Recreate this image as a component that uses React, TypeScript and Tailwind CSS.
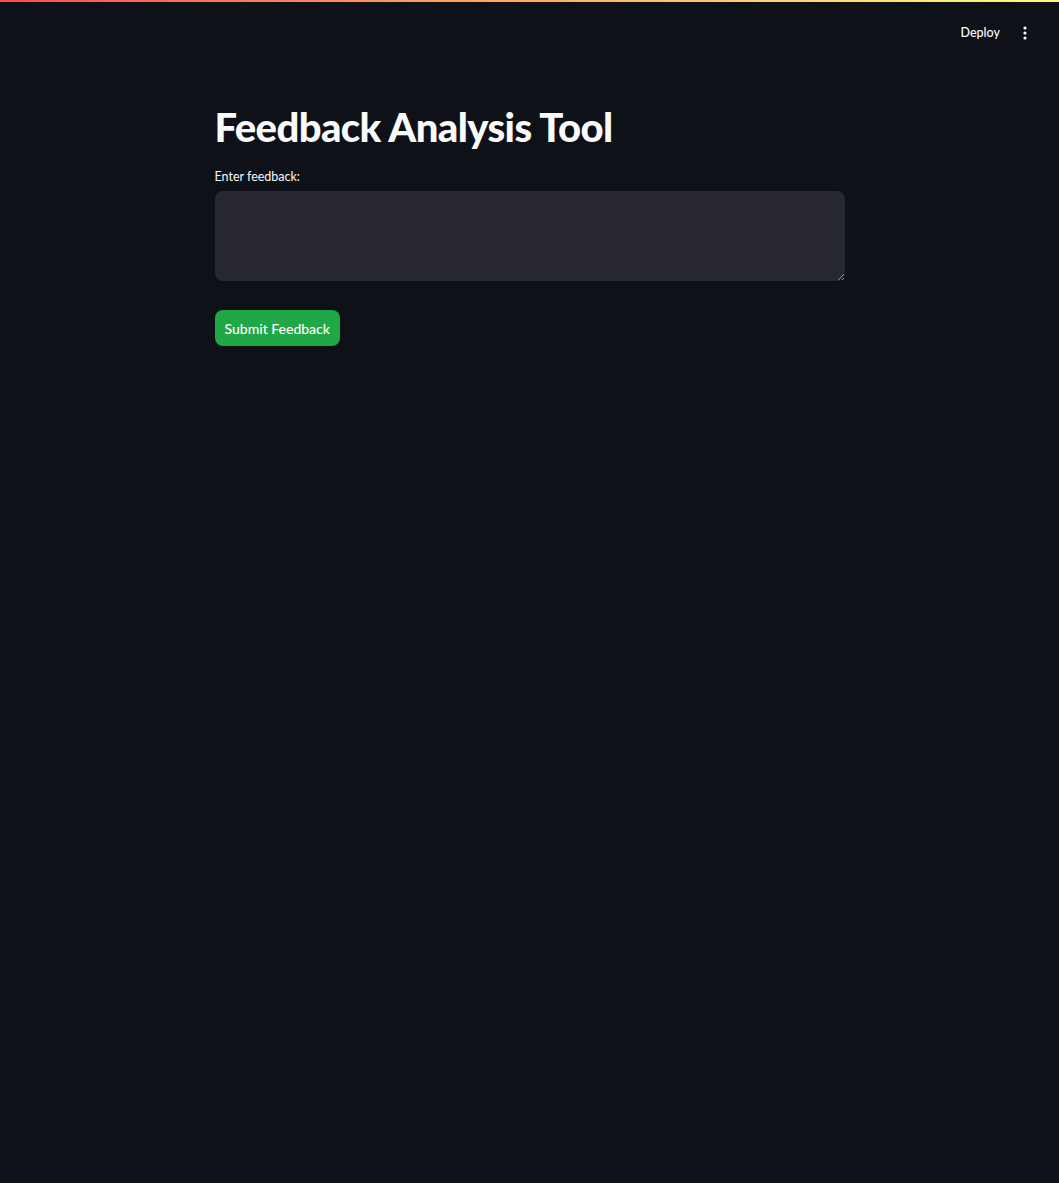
export default function App() {
  return (
    <div className="min-h-[1183px] bg-[#0e1117] text-[#fafafa]" style={{ fontFamily: 'Lato, "Noto Sans", sans-serif' }}>
      <div className="h-[2px] bg-gradient-to-r from-[#ff4b4b] to-[#fffd80]" />
      <header className="flex h-[62px] items-center justify-end gap-[17px] pr-[26px]">
        <span className="text-[12.5px] font-medium text-[#fafafa]">Deploy</span>
        <svg width="16" height="16" viewBox="0 0 16 16" className="text-[#fafafa]">
          <circle cx="8" cy="3" r="1.6" fill="currentColor" />
          <circle cx="8" cy="8" r="1.6" fill="currentColor" />
          <circle cx="8" cy="13" r="1.6" fill="currentColor" />
        </svg>
      </header>
      <main className="mx-auto w-[630px] pt-[37px]">
        <h1 className="text-[40px] font-black leading-[52px] tracking-[-0.6px]">Feedback Analysis Tool</h1>
        <label className="mt-[15px] block text-[12.5px] leading-[18px]">Enter feedback:</label>
        <textarea className="mt-[5px] block h-[90px] w-full resize-y rounded-lg bg-[#262730] p-3 text-sm outline-none" />
        <button className="mt-[29px] flex h-[36px] items-center rounded-lg bg-[#21a846] px-[10px] text-[14px] font-medium text-white">
          Submit Feedback
        </button>
      </main>
    </div>
  )
}
